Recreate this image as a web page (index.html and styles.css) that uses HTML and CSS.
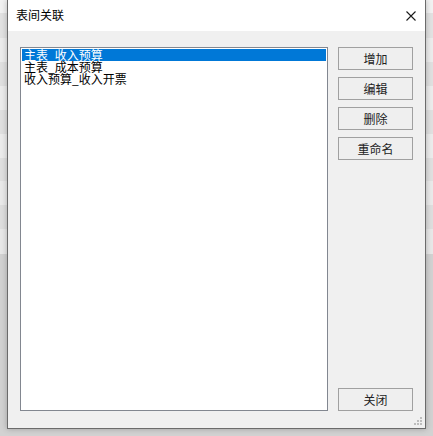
FILE: index.html
```html
<!DOCTYPE html>
<html lang="zh">
<head>
<meta charset="utf-8">
<title>表间关联</title>
<link rel="stylesheet" href="styles.css">
</head>
<body>
<div class="desk">
  <div class="dialog">
    <div class="titlebar">
      <span class="title">表间关联</span>
      <svg class="close" width="10" height="10" viewBox="0 0 10 10"><path d="M0.5 0.5 L9.5 9.5 M9.5 0.5 L0.5 9.5" stroke="#1a1a1a" stroke-width="1.1" fill="none"/></svg>
    </div>
    <div class="body">
      <div class="listbox">
        <div class="item selected">主表_收入预算</div>
        <div class="item">主表_成本预算</div>
        <div class="item">收入预算_收入开票</div>
      </div>
      <div class="buttons">
        <button class="btn">增加</button>
        <button class="btn">编辑</button>
        <button class="btn">删除</button>
        <button class="btn">重命名</button>
        <button class="btn btn-close">关闭</button>
      </div>
    </div>
    <svg class="grip" width="9" height="9" viewBox="0 0 9 9">
      <rect x="6" y="0" width="2" height="2" fill="#bdbdbd"/>
      <rect x="3" y="3" width="2" height="2" fill="#bdbdbd"/>
      <rect x="6" y="3" width="2" height="2" fill="#bdbdbd"/>
      <rect x="0" y="6" width="2" height="2" fill="#bdbdbd"/>
      <rect x="3" y="6" width="2" height="2" fill="#bdbdbd"/>
      <rect x="6" y="6" width="2" height="2" fill="#bdbdbd"/>
    </svg>
  </div>
</div>
</body>
</html>
```

FILE: styles.css
```css
html, body {
  margin: 0;
  padding: 0;
}
body {
  width: 433px;
  height: 436px;
  overflow: hidden;
  font-family: "Noto Sans CJK SC", "Noto Sans", sans-serif;
  background:
    linear-gradient(to bottom,
      #f2f2f2 0px, #f2f2f2 13px,
      #e2e2e2 13px, #e2e2e2 38px,
      #ececec 38px, #ececec 62px,
      #e0e0e0 62px, #e0e0e0 86px,
      #ececec 86px, #ececec 110px,
      #e0e0e0 110px, #e0e0e0 134px,
      #ececec 134px, #ececec 158px,
      #e0e0e0 158px, #e0e0e0 181px,
      #eaeaea 181px, #eaeaea 205px,
      #dedede 205px, #dedede 229px,
      #e8e8e8 229px, #e8e8e8 254px,
      #d2d2d2 254px, #d2d2d2 436px);
}
.desk {
  padding-left: 7px;
}
.dialog {
  position: relative;
  width: 417px;
  height: 428px;
  background: #f0f0f0;
  border: 1px solid #6b6b6b;
  border-top: none;
  box-shadow: 0 0 6px rgba(0,0,0,0.25);
  display: flex;
  flex-direction: column;
}
.titlebar {
  height: 31px;
  background: #ffffff;
  display: flex;
  align-items: center;
  justify-content: space-between;
  padding: 0 9px 0 8px;
  flex-shrink: 0;
}
.title {
  font-size: 12px;
  color: #000;
  line-height: 12px;
  margin-top: -1px;
}
.close {
  display: block;
  margin-top: 1px;
}
.body {
  display: flex;
  padding: 16px 12px 0 12px;
  gap: 10px;
}
.listbox {
  width: 306px;
  height: 362px;
  border: 1px solid #828790;
  background: #ffffff;
  padding: 1px;
  box-sizing: content-box;
}
.listbox {
  width: 304px;
  height: 360px;
}
.item {
  height: 12px;
  line-height: 12px;
  font-size: 12px;
  padding-left: 2px;
  color: #000;
  white-space: nowrap;
}
.item.selected {
  background: #0078d7;
  color: #ffffff;
}
.buttons {
  display: flex;
  flex-direction: column;
  gap: 7px;
  height: 364px;
  width: 75px;
}
.btn {
  width: 75px;
  height: 23px;
  margin: 0;
  padding: 0;
  border: 1px solid #a0a0a0;
  background: #efefef;
  font-family: "Noto Sans CJK SC", "Noto Sans", sans-serif;
  font-size: 12px;
  line-height: 12px;
  color: #222;
  box-sizing: border-box;
}
.btn-close {
  margin-top: auto;
}
.grip {
  position: absolute;
  right: 2px;
  bottom: 2px;
}
```
